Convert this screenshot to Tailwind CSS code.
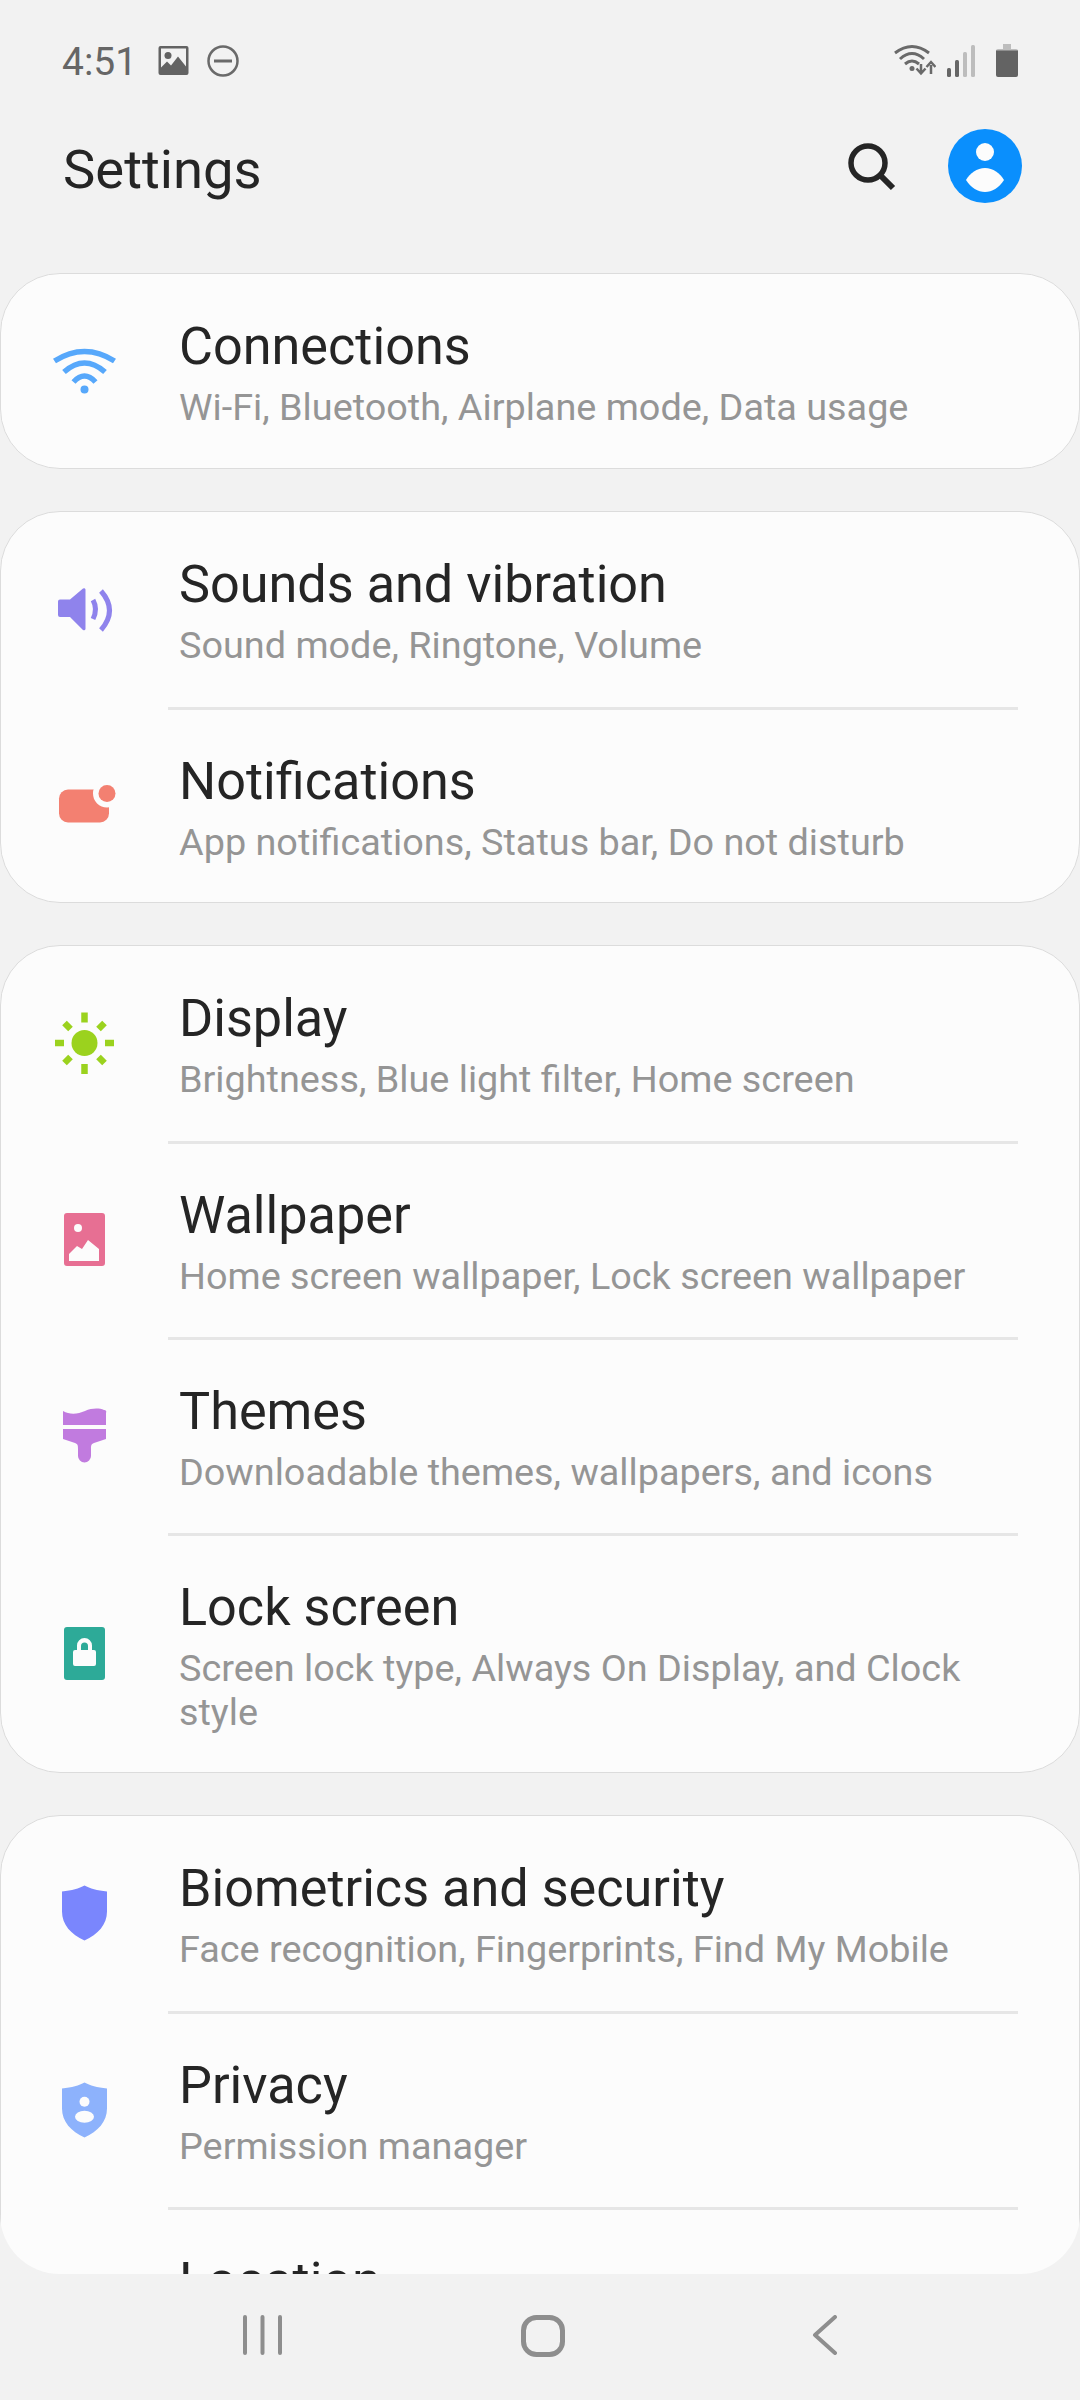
<!DOCTYPE html>
<html lang="en">
<head>
  <meta charset="UTF-8">
  <meta name="viewport" content="width=device-width, initial-scale=1.0">
  <title>Settings</title>
  <script src="https://cdn.jsdelivr.net/npm/@tailwindcss/browser@4"></script>
</head>
<body class="bg-[#f2f2f2] font-['Roboto',sans-serif]">
<div class="w-[1080px] h-[2400px] flex flex-col overflow-hidden">

  <!-- Status bar -->
  <div class="h-[122px] pt-[38px] pl-[62px] pr-[62px] flex items-start shrink-0">
    <span class="text-[39px] leading-[44px] mt-[2px] text-[#666666] w-[96px]">4:51</span>
    <svg class="w-[31px] h-[30px] mt-[8px]" viewBox="0 0 30 30"><path fill-rule="evenodd" fill="#636363" d="M2 0h26a2 2 0 0 1 2 2v25a2 2 0 0 1-2 2H2a2 2 0 0 1-2-2V2a2 2 0 0 1 2-2zM2.500 2.500v19l6-6 4 4 7-9 8 10v-18z"/><circle cx="9.500" cy="9.500" r="3.500" fill="#636363"/></svg>
    <svg class="w-[32px] h-[32px] ml-[18px] mt-[7px]" viewBox="0 0 32 32"><circle cx="16" cy="16" r="14.500" fill="none" stroke="#6a6a6a" stroke-width="2.500"/><path d="M7 16h18" stroke="#6a6a6a" stroke-width="3"/></svg>
    <svg class="w-[42px] h-[34px] ml-auto mt-[5px]" viewBox="0 0 42 34"><g fill="none" stroke="#6a6a6a" stroke-width="3"><path d="M1 10Q18 -3 35 10"/><path d="M6 16Q18 5 30 16"/><path d="M11 21Q18 15 25 21"/></g><circle cx="18" cy="25.500" r="2.500" fill="#6a6a6a"/><path d="M27 21v9M22.500 25.500l4.500 5 4.500-5M37 31v-9M32.500 24l4.500-5 4.500 5" fill="none" stroke="#6a6a6a" stroke-width="2.500"/></svg>
    <svg class="w-[28px] h-[32px] ml-[11px] mt-[7px]" viewBox="0 0 28 32"><rect x="0" y="23" width="4" height="9" rx="1.500" fill="#666666"/><rect x="8" y="15" width="4" height="17" rx="1.500" fill="#666666"/><rect x="16" y="7" width="4" height="25" rx="1.500" fill="#bdbdbd"/><rect x="24" y="0" width="4" height="32" rx="1.500" fill="#bdbdbd"/></svg>
    <svg class="w-[22px] h-[34px] ml-[21px] mt-[6px]" viewBox="0 0 22 34"><path d="M7 0h8v5h5a2 2 0 0 1 2 2v4H0V7a2 2 0 0 1 2-2h5z" fill="#bdbdbd"/><path d="M0 6.500h22V31a2 2 0 0 1-2 2H2a2 2 0 0 1-2-2z" fill="#636363"/></svg>
  </div>

  <!-- Header -->
  <div class="h-[151px] pl-[63px] pr-[58px] flex items-start shrink-0">
    <h1 class="text-[54.400px] leading-[60px] font-normal text-[#252525] mt-[18px]">Settings</h1>
    <svg class="w-[50px] h-[50px] ml-auto mt-[20px]" viewBox="0 0 50 50"><circle cx="21" cy="21" r="17" fill="none" stroke="#252525" stroke-width="5.500"/><path d="M33 33l13 13" stroke="#252525" stroke-width="6"/></svg>
    <svg class="w-[74px] h-[74px] ml-[51px] mt-[7px]" viewBox="0 0 74 74"><circle cx="37" cy="37" r="37" fill="#0a8ffd"/><circle cx="37" cy="23" r="9" fill="#fcfcfc"/><path d="M18 51C22 44 29 39 37 39s15 5 19 12C51 59 44 63 37 63S23 59 18 51z" fill="#fcfcfc"/></svg>
  </div>

  <!-- List -->
  <div class="h-[2001px] shrink-0 overflow-hidden rounded-b-[60px] flex flex-col gap-[42px]">

    <section class="bg-[#fcfcfc] border border-[#dcdcdc] rounded-[60px] shrink-0">
      <div class="h-[194px] flex items-center">
        <svg class="w-[64px] h-[64px] ml-[51px] mr-[63px] shrink-0" viewBox="0 0 64 64"><g fill="none" stroke="#57a8fb" stroke-width="5.500"><path d="M2.500 22Q32.500 3 62.500 22"/><path d="M12 33Q32.500 15 53 33"/><path d="M21.500 43Q32.500 31 43.500 43"/></g><circle cx="32.500" cy="50.500" r="4" fill="#57a8fb"/></svg>
        <div class="pt-[3px]">
          <div class="text-[52.200px] leading-[60px] text-[#252525]">Connections</div>
          <div class="text-[37.800px] leading-[44px] text-[#959595] mt-[8px]">Wi-Fi, Bluetooth, Airplane mode, Data usage</div>
        </div>
      </div>
    </section>

    <section class="bg-[#fcfcfc] border border-[#dcdcdc] rounded-[60px] shrink-0">
      <div class="h-[195px] flex items-center">
        <svg class="w-[64px] h-[64px] ml-[51px] mr-[63px] shrink-0" viewBox="0 0 64 64"><path d="M8 21.500h10L31 10.500q2-1 2.500 1V51q-.5 2-2.500 1L18 39H8a2 2 0 0 1-2-2V23.500a2 2 0 0 1 2-2z" fill="#8f83ec"/><g fill="none" stroke="#8f83ec" stroke-width="5"><path d="M41 22Q46 31 41 41"/><path d="M49 13Q66 32.500 49 52"/></g></svg>
        <div class="pt-[3px]">
          <div class="text-[52.200px] leading-[60px] text-[#252525]">Sounds and vibration</div>
          <div class="text-[37.800px] leading-[44px] text-[#959595] mt-[8px]">Sound mode, Ringtone, Volume</div>
        </div>
      </div>
      <div class="h-[3px] ml-[167px] mr-[61px] bg-[#e6e6e6]"></div>
      <div class="h-[192px] flex items-center">
        <svg class="w-[64px] h-[64px] ml-[51px] mr-[63px] shrink-0" viewBox="0 0 64 64"><rect x="7" y="15.500" width="50" height="33" rx="9" fill="#f38071"/><circle cx="55" cy="19.500" r="14" fill="#fcfcfc"/><circle cx="55" cy="19.500" r="8.500" fill="#f38071"/></svg>
        <div class="pt-[3px]">
          <div class="text-[52.200px] leading-[60px] text-[#252525]">Notifications</div>
          <div class="text-[37.800px] leading-[44px] text-[#959595] mt-[8px]">App notifications, Status bar, Do not disturb</div>
        </div>
      </div>
    </section>

    <section class="bg-[#fcfcfc] border border-[#dcdcdc] rounded-[60px] shrink-0">
      <div class="h-[195px] flex items-center">
        <svg class="w-[64px] h-[64px] ml-[51px] mr-[63px] shrink-0" viewBox="0 0 64 64"><circle cx="32.500" cy="31" r="13" fill="#9bd21e"/><g stroke="#9bd21e" stroke-width="6.500"><path d="M32.500 .5v10M32.500 52v10M3 31h9M53 31h9M12.500 11l6 6M52.500 11l-6 6M12.500 51l6-6M52.500 51l-6-6"/></g></svg>
        <div class="pt-[3px]">
          <div class="text-[52.200px] leading-[60px] text-[#252525]">Display</div>
          <div class="text-[37.800px] leading-[44px] text-[#959595] mt-[8px]">Brightness, Blue light filter, Home screen</div>
        </div>
      </div>
      <div class="h-[3px] ml-[167px] mr-[61px] bg-[#e6e6e6]"></div>
      <div class="h-[193px] flex items-center">
        <svg class="w-[64px] h-[64px] ml-[51px] mr-[63px] shrink-0" viewBox="0 0 64 64"><path fill-rule="evenodd" d="M15 4h35a3 3 0 0 1 3 3v47a3 3 0 0 1-3 3H15a3 3 0 0 1-3-3V7a3 3 0 0 1 3-3zM17 52V45l8-8 5 3 6-9 11 9v12z" fill="#e76f93"/><circle cx="26" cy="19" r="4" fill="#fcfcfc"/></svg>
        <div class="pt-[3px]">
          <div class="text-[52.200px] leading-[60px] text-[#252525]">Wallpaper</div>
          <div class="text-[37.800px] leading-[44px] text-[#959595] mt-[8px]">Home screen wallpaper, Lock screen wallpaper</div>
        </div>
      </div>
      <div class="h-[3px] ml-[167px] mr-[61px] bg-[#e6e6e6]"></div>
      <div class="h-[193px] flex items-center">
        <svg class="w-[64px] h-[64px] ml-[51px] mr-[63px] shrink-0" viewBox="0 0 64 64"><path d="M11 6C18 10 26 9 33 6s14-3 19-1a2 2 0 0 1 2 3V20H11z" fill="#c17bdf"/><path d="M11 24h43v10l-12 4c-3 1-3 3-3 6v7a6.500 6.500 0 0 1-13 0v-7c0-3 0-5-3-6L11 34z" fill="#c17bdf"/></svg>
        <div class="pt-[3px]">
          <div class="text-[52.200px] leading-[60px] text-[#252525]">Themes</div>
          <div class="text-[37.800px] leading-[44px] text-[#959595] mt-[8px]">Downloadable themes, wallpapers, and icons</div>
        </div>
      </div>
      <div class="h-[3px] ml-[167px] mr-[61px] bg-[#e6e6e6]"></div>
      <div class="h-[236px] flex items-center">
        <svg class="w-[64px] h-[64px] ml-[51px] mr-[63px] shrink-0" viewBox="0 0 64 64"><rect x="12" y="5" width="41" height="53" rx="3" fill="#2daa98"/><path fill-rule="evenodd" d="M23 28h2v-4.500a7.500 7.500 0 0 1 15 0V28h2a2 2 0 0 1 2 2v12a2 2 0 0 1-2 2H23a2 2 0 0 1-2-2V30a2 2 0 0 1 2-2zM29 28h7v-4a3.500 3.500 0 0 0-7 0z" fill="#fcfcfc"/></svg>
        <div class="flex-1 pr-[61px] pt-[3px]">
          <div class="text-[52.200px] leading-[60px] text-[#252525]">Lock screen</div>
          <div class="text-[37.800px] leading-[44px] text-[#959595] mt-[8px]">Screen lock type, Always On Display, and Clock style</div>
        </div>
      </div>
    </section>

    <section class="bg-[#fcfcfc] border border-[#dcdcdc] rounded-[60px] shrink-0">
      <div class="h-[195px] flex items-center">
        <svg class="w-[64px] h-[64px] ml-[51px] mr-[63px] shrink-0" viewBox="0 0 64 64"><path d="M32.500 3.500C38 6.500 45 8.500 55 9.500v20c0 13-9 23-22.500 29C19 52.500 10 42.500 10 29.500v-20C20 8.500 27 6.500 32.500 3.500z" fill="#7a86fd"/></svg>
        <div class="pt-[3px]">
          <div class="text-[52.200px] leading-[60px] text-[#252525]">Biometrics and security</div>
          <div class="text-[37.800px] leading-[44px] text-[#959595] mt-[8px]">Face recognition, Fingerprints, Find My Mobile</div>
        </div>
      </div>
      <div class="h-[3px] ml-[167px] mr-[61px] bg-[#e6e6e6]"></div>
      <div class="h-[193px] flex items-center">
        <svg class="w-[64px] h-[64px] ml-[51px] mr-[63px] shrink-0" viewBox="0 0 64 64"><path d="M32.500 3.500C38 6.500 45 8.500 55 9.500v20c0 13-9 23-22.500 29C19 52.500 10 42.500 10 29.500v-20C20 8.500 27 6.500 32.500 3.500z" fill="#8db2fc"/><circle cx="32.500" cy="22.700" r="5" fill="#fcfcfc"/><ellipse cx="32.500" cy="37.700" rx="9.500" ry="6" fill="#fcfcfc"/></svg>
        <div class="pt-[3px]">
          <div class="text-[52.200px] leading-[60px] text-[#252525]">Privacy</div>
          <div class="text-[37.800px] leading-[44px] text-[#959595] mt-[8px]">Permission manager</div>
        </div>
      </div>
      <div class="h-[3px] ml-[167px] mr-[61px] bg-[#e6e6e6]"></div>
      <div class="h-[193px] pt-[42px] pl-[178px]">
        <div class="text-[52.200px] leading-[60px] text-[#252525]">Location</div>
      </div>
    </section>
  </div>

  <!-- Nav bar -->
  <div class="flex-1 flex items-start pt-[41px] pl-[243px]">
    <svg class="w-[39px] h-[40px]" viewBox="0 0 39 40"><path d="M2 2v36M19.500 2v36M37 2v36" stroke="#8e8e8e" stroke-width="4" stroke-linecap="round"/></svg>
    <svg class="w-[44px] h-[42px] ml-[239px]" viewBox="0 0 44 42"><rect x="2.500" y="2.500" width="39" height="37" rx="13" fill="none" stroke="#8e8e8e" stroke-width="5"/></svg>
    <svg class="w-[26px] h-[40px] ml-[247px]" viewBox="0 0 26 40"><path d="M23 2L3 20l20 18" fill="none" stroke="#8e8e8e" stroke-width="4" stroke-linecap="round" stroke-linejoin="round"/></svg>
  </div>
</div>
</body>
</html>
